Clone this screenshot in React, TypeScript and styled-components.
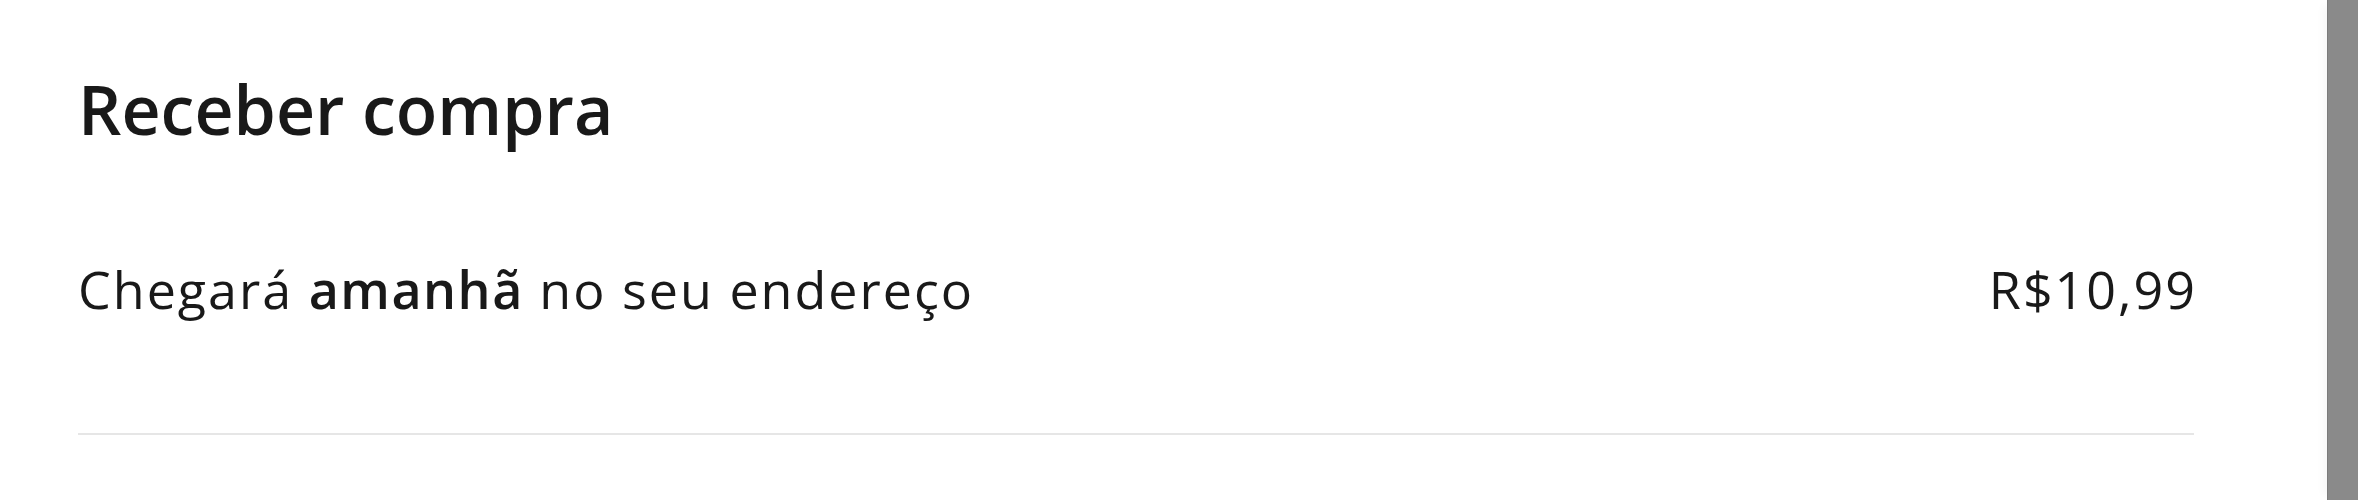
import React from "react";
import styled, { createGlobalStyle } from "styled-components";

const GlobalStyle = createGlobalStyle`
  html, body {
    margin: 0;
    padding: 0;
    background: #ffffff;
  }
  body {
    font-family: "Open Sans", "Noto Sans", sans-serif;
    color: rgba(0, 0, 0, 0.9);
  }
`;

const Page = styled.div`
  display: flex;
  height: 500px;
  overflow: hidden;
  background: #ffffff;
`;

const Main = styled.main`
  flex: 1;
  padding: 66px 133px 0 78px;
`;

const Title = styled.h2`
  margin: 0;
  font-size: 68px;
  line-height: 86px;
  font-weight: 600;
  color: rgba(0, 0, 0, 0.9);
`;

const Row = styled.div`
  display: flex;
  justify-content: space-between;
  align-items: baseline;
  margin-top: 104px;
  font-size: 52px;
  line-height: 65px;
  letter-spacing: 2px;
`;

const Text = styled.span`
  font-weight: 400;
`;

const Strong = styled.strong`
  font-weight: 600;
  letter-spacing: 1.5px;
`;

const Price = styled.span`
  font-weight: 400;
  margin-right: -3px;
`;

const Divider = styled.hr`
  margin: 112px 0 0;
  border: 0;
  border-top: 2px solid #e6e6e6;
`;

const Scrollbar = styled.div`
  width: 30px;
  flex-shrink: 0;
  background: #8a8a8a;
  border-left: 1px solid #7c7c7c;
  box-shadow: -10px 0 8px -6px rgba(0, 0, 0, 0.03);
`;

export default function App() {
  return (
    <>
      <GlobalStyle />
      <Page>
        <Main>
          <Title>Receber compra</Title>
          <Row>
            <Text>
              Chegará <Strong>amanhã</Strong> no seu endereço
            </Text>
            <Price>R$10,99</Price>
          </Row>
          <Divider />
        </Main>
        <Scrollbar />
      </Page>
    </>
  );
}
